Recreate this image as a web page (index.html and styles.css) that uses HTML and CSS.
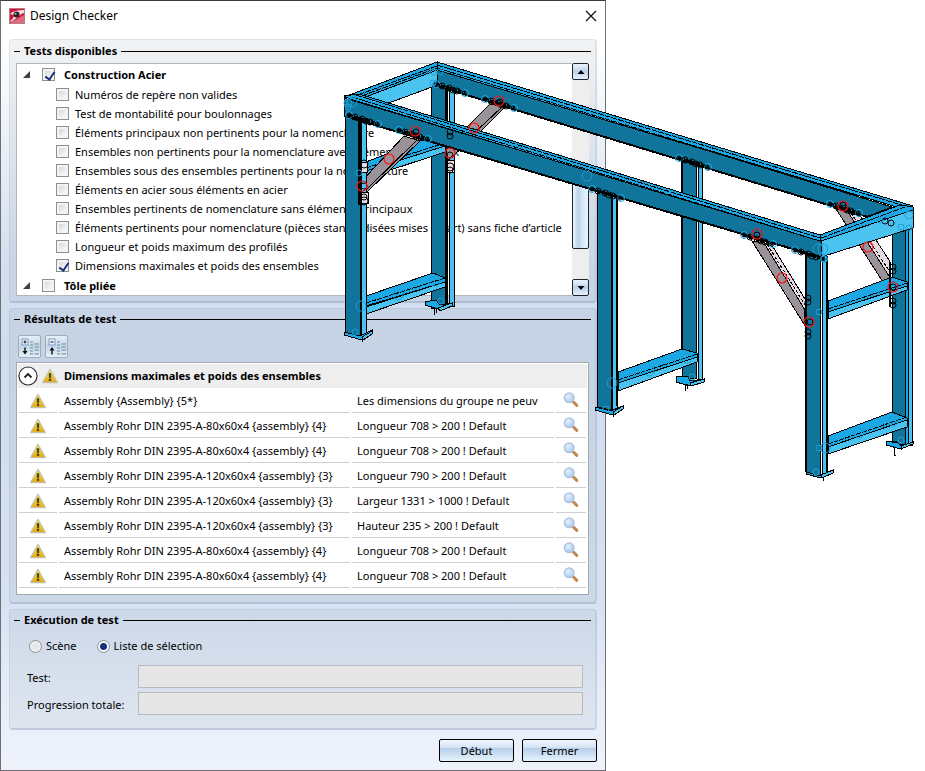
FILE: index.html
```
<!DOCTYPE html>
<html lang="fr">
<head>
  <meta charset="UTF-8" />
  <meta name="viewport" content="width=device-width, initial-scale=1.0" />
  <title>Design Checker</title>
  <link rel="stylesheet" href="styles.css">
</head>
<body>

  <!-- Icônes communes -->
  <svg class="defs" aria-hidden="true">
    <defs>
      <linearGradient id="gold" x1="0" y1="0" x2="0" y2="1">
        <stop offset="0" stop-color="#f8ec4a" />
        <stop offset="1" stop-color="#e6a810" />
      </linearGradient>
      <radialGradient id="lens" cx=".4" cy=".35" r=".7">
        <stop offset="0" stop-color="#e4f1fc" />
        <stop offset="1" stop-color="#a3c8ee" />
      </radialGradient>
    </defs>
    <symbol id="warn" viewBox="0 0 16 16">
      <path d="M8 1.2 L15.4 14.6 H.6 Z" fill="url(#gold)" stroke="#c3c0ae" stroke-width="1.2" stroke-linejoin="round" />
      <path d="M7 5.4 H9 L8.7 10 H7.3 Z M7.1 11 H8.9 V12.8 H7.1 Z" fill="#3c3a18" stroke="#3c3a18" stroke-width=".4" />
    </symbol>
    <symbol id="loupe" viewBox="0 0 16 16">
      <path d="M9.4 9.2 L11 10.8" stroke="#8a94a4" stroke-width="2" />
      <path d="M10.8 10.4 L13.8 13.4" stroke="#c08a54" stroke-width="3" stroke-linecap="round" />
      <circle cx="6.2" cy="5.8" r="4.9" fill="url(#lens)" stroke="#aebfdc" stroke-width="1.2" />
    </symbol>
  </svg>

  <main class="stage">
    <section class="dialog">
      <header class="titlebar">
        <svg class="logo" viewBox="0 0 16 16">
          <rect width="16" height="16" fill="#d2143a" />
          <path d="M1 6 C4 3 9 2 15 2 V5 C11 6 6 12 2 14 L1 13 C4 11 5 9 5 7 Z" fill="#f0dfe2" />
          <path d="M8 11 L15 6 V15 H3 Z" fill="#c8123a" />
          <path d="M1 15 L15 7 V15 Z" fill="#e8a8b4" opacity=".6" />
          <circle cx="7.5" cy="6.5" r="3" fill="#2a1c20" />
          <circle cx="6.6" cy="5.8" r="1" fill="#bbb" />
          <rect x=".5" y=".5" width="15" height="15" fill="none" stroke="#b97a86" />
        </svg>
        <h1>Design Checker</h1>
        <button class="close" aria-label="Fermer la fenêtre">
          <svg viewBox="0 0 12 12"><path d="M1 1 L11 11 M11 1 L1 11" stroke="#111" stroke-width="1.2" /></svg>
        </button>
      </header>

      <section class="group">
        <h2>Tests disponibles</h2>
        <div class="box tests">
          <ul class="tree">
            <li class="root"><span class="arrow"></span><label><input type="checkbox" checked>Construction Acier</label></li>
            <li><label><input type="checkbox">Numéros de repère non valides</label></li>
            <li><label><input type="checkbox">Test de montabilité pour boulonnages</label></li>
            <li><label><input type="checkbox">Éléments principaux non pertinents pour la nomenclature</label></li>
            <li><label><input type="checkbox">Ensembles non pertinents pour la nomenclature avec éléments principaux</label></li>
            <li><label><input type="checkbox">Ensembles sous des ensembles pertinents pour la nomenclature</label></li>
            <li><label><input type="checkbox">Éléments en acier sous éléments en acier</label></li>
            <li><label><input type="checkbox">Ensembles pertinents de nomenclature sans éléments principaux</label></li>
            <li><label><input type="checkbox">Éléments pertinents pour nomenclature (pièces standardisées mises à part) sans fiche d’article</label></li>
            <li><label><input type="checkbox">Longueur et poids maximum des profilés</label></li>
            <li><label><input type="checkbox" checked>Dimensions maximales et poids des ensembles</label></li>
            <li class="root"><span class="arrow"></span><label><input type="checkbox">Tôle pliée</label></li>
          </ul>
          <div class="scroll">
            <button aria-label="Monter"><svg viewBox="0 0 8 4"><path d="M4 0 L7.5 4 H.5 Z" /></svg></button>
            <div class="thumb"></div>
            <button aria-label="Descendre"><svg viewBox="0 0 8 4"><path d="M.5 0 H7.5 L4 4 Z" /></svg></button>
          </div>
        </div>
      </section>

      <section class="group results">
        <h2>Résultats de test</h2>
        <div class="tools">
          <button aria-label="Tout développer">
            <svg viewBox="0 0 18 18">
              <rect x="1" y="1" width="6" height="6" fill="#e8f2fb" stroke="#7e9cc4" />
              <path d="M2.5 4 H5.5 M4 2.5 V5.5" stroke="#111" />
              <path d="M4 9.5 V15" stroke="#111" stroke-width="1.4" />
              <path d="M1.5 13 H6.5 L4 16.5 Z" fill="#111" />
              <path d="M9 4 H12 M9 7 H12 M9 10 H12 M9 13 H12 M13.5 6 H18 M13.5 9 H18 M13.5 12 H18" stroke="#8ea6bd" stroke-width="1.4" />
              <path d="M9 16 H12 M13.5 16 H18" stroke="#6a7f95" />
            </svg>
          </button>
          <button aria-label="Tout réduire">
            <svg viewBox="0 0 18 18">
              <rect x="1" y="1" width="6" height="6" fill="#e8f2fb" stroke="#7e9cc4" />
              <path d="M2.5 4 H5.5" stroke="#111" />
              <path d="M4 11 V16.5" stroke="#111" stroke-width="1.4" />
              <path d="M1.5 12.5 H6.5 L4 9 Z" fill="#111" />
              <path d="M9 4 H12 M9 7 H12 M9 10 H12 M9 13 H12 M13.5 6 H18 M13.5 9 H18 M13.5 12 H18" stroke="#8ea6bd" stroke-width="1.4" />
              <path d="M9 16 H12 M13.5 16 H18" stroke="#6a7f95" />
            </svg>
          </button>
        </div>
        <div class="box list">
          <div class="category">
            <button class="fold" aria-label="Replier"><svg viewBox="0 0 20 20"><circle cx="10" cy="10" r="9" fill="#fff" stroke="#333" stroke-width="1.2" /><path d="M6.5 11.5 L10 8 L13.5 11.5" fill="none" stroke="#222" stroke-width="1.8" /></svg></button>
            <svg class="icon"><use href="#warn" /></svg>
            <h3>Dimensions maximales et poids des ensembles</h3>
          </div>
          <table>
            <colgroup><col class="c-icon"><col class="c-name"><col class="c-text"><col class="c-zoom"></colgroup>
            <tr><td><svg class="icon"><use href="#warn" /></svg></td><td>Assembly {Assembly} {5*}</td><td><span>Les dimensions du groupe ne peuv</span></td><td><svg class="icon"><use href="#loupe" /></svg></td></tr>
            <tr><td><svg class="icon"><use href="#warn" /></svg></td><td>Assembly Rohr DIN 2395-A-80x60x4 {assembly} {4}</td><td><span>Longueur 708 &gt; 200 ! Default</span></td><td><svg class="icon"><use href="#loupe" /></svg></td></tr>
            <tr><td><svg class="icon"><use href="#warn" /></svg></td><td>Assembly Rohr DIN 2395-A-80x60x4 {assembly} {4}</td><td><span>Longueur 708 &gt; 200 ! Default</span></td><td><svg class="icon"><use href="#loupe" /></svg></td></tr>
            <tr><td><svg class="icon"><use href="#warn" /></svg></td><td>Assembly Rohr DIN 2395-A-120x60x4 {assembly} {3}</td><td><span>Longueur 790 &gt; 200 ! Default</span></td><td><svg class="icon"><use href="#loupe" /></svg></td></tr>
            <tr><td><svg class="icon"><use href="#warn" /></svg></td><td>Assembly Rohr DIN 2395-A-120x60x4 {assembly} {3}</td><td><span>Largeur 1331 &gt; 1000 ! Default</span></td><td><svg class="icon"><use href="#loupe" /></svg></td></tr>
            <tr><td><svg class="icon"><use href="#warn" /></svg></td><td>Assembly Rohr DIN 2395-A-120x60x4 {assembly} {3}</td><td><span>Hauteur 235 &gt; 200 ! Default</span></td><td><svg class="icon"><use href="#loupe" /></svg></td></tr>
            <tr><td><svg class="icon"><use href="#warn" /></svg></td><td>Assembly Rohr DIN 2395-A-80x60x4 {assembly} {4}</td><td><span>Longueur 708 &gt; 200 ! Default</span></td><td><svg class="icon"><use href="#loupe" /></svg></td></tr>
            <tr><td><svg class="icon"><use href="#warn" /></svg></td><td>Assembly Rohr DIN 2395-A-80x60x4 {assembly} {4}</td><td><span>Longueur 708 &gt; 200 ! Default</span></td><td><svg class="icon"><use href="#loupe" /></svg></td></tr>
          </table>
        </div>
      </section>

      <section class="group run">
        <h2>Exécution de test</h2>
        <div class="radios">
          <label><input type="radio" name="cible">Scène</label>
          <label><input type="radio" name="cible" checked>Liste de sélection</label>
        </div>
        <div class="bars">
          <label for="p-test">Test:</label>
          <progress id="p-test" value="0" max="100"></progress>
          <label for="p-total">Progression totale:</label>
          <progress id="p-total" value="0" max="100"></progress>
        </div>
      </section>

      <footer class="actions">
        <button>Début</button>
        <button>Fermer</button>
      </footer>
    </section>

    <!-- Structure acier -->
    <svg class="model" viewBox="340 50 585 440" role="img" aria-label="Structure acier">
      <defs>
        <!-- rangée de boulons le long d'une poutre -->
        <g id="bolts" fill="none" stroke="#000">
          <path d="M0 0 L30 9" stroke-width="3" stroke-dasharray="5 1" />
          <circle cx="1" cy="0" r="3.5" stroke="#1ba8e4" /><circle cx="1" cy="0" r="2" />
          <circle cx="7" cy="2" r="3" /><circle cx="14" cy="4" r="3" />
          <circle cx="18" cy="6" r="3" /><circle cx="22" cy="7" r="3" />
          <circle cx="30" cy="9" r="3.5" stroke="#1ba8e4" /><circle cx="29" cy="9" r="2" />
        </g>
      </defs>

      <!-- pied arrière gauche -->
      <path class="dark" d="M431 84 H446 V308 H431 Z" />
      <path class="light" d="M449 88 H454 V306 H449 Z" />
      <path class="thick" d="M447 88 V306" />
      <path class="wire" d="M445 84 V308 M431 84 V300" />
      <path class="mid" d="M425 302 L436 300 L440 305 L452 303 V306 L438 309 L425 305 Z" />
      <path class="light" d="M438 308 L452 303 V306 L440 311 Z" />
      <path class="wire" d="M434 309 V315 M436 309 V313" />

      <!-- pied arrière milieu -->
      <path class="dark" d="M682 160 H696 V378 H682 Z" />
      <path class="light" d="M698 164 H702 V380 H698 Z" />
      <path class="wire" d="M681 160 V366 M696 160 V378" />
      <path class="mid" d="M676 377 L688 376 L690 381 L704 379 V382 L690 386 L676 382 Z" />
      <path class="light" d="M690 383 L704 379 V382 L691 386 Z" />
      <path class="wire" d="M685 384 V391 M687 384 V389" />

      <!-- pied arrière droit -->
      <path class="dark" d="M892 220 H905 V444 H892 Z" />
      <path class="mid" d="M905 224 H908 V444 H905 Z" />
      <path class="light" d="M908 226 H912 V445 H908 Z" />
      <path class="mid" d="M886 441 L896 441 L901 446 L901 449 L886 445 Z" />
      <path class="light" d="M901 446 L913 442 V444 L901 449 Z" />
      <path class="wire" d="M894 447 V455 L896 455 M892 442 H897" />

      <!-- diagonales arrière -->
      <path class="grey" d="M464 130 L490 104 L505 107 L477 135 L448 160 L446 150 Z" />
      <path class="wire" d="M472 135 L501 108" />
      <path class="grey" d="M836 209 L848 212 L890 276 V282 H883 Z" />
      <path class="pink" d="M848 212 L861 217 L889 260 V276 Z" />
      <path class="wire" d="M851 213 L890 272" stroke-dasharray="3 2" />

      <!-- traverses -->
      <path class="mid" d="M366 162 L428 138 L445 141 V146 L366 171 Z" />
      <path class="light" d="M366 171 L445 146 V152 L366 178 Z" />
      <path class="wire" d="M366 168 L445 143" stroke-dasharray="5 1" />
      <path class="mid" d="M366 296 L433 273 L445 278 V282 L366 306 Z" />
      <path class="light" d="M366 307 L445 282 V287 L366 314 Z" />
      <path class="wire" d="M366 303 L445 278" stroke-dasharray="5 1" />
      <path class="mid" d="M618 372 L682 349 L697 353 V357 L618 383 Z" />
      <path class="light" d="M618 383 L697 357 V362 L618 391 Z" />
      <path class="wire" d="M618 380 L697 354" stroke-dasharray="5 1" />
      <path class="mid" d="M828 301 L892 277 L907 282 V286 L828 312 Z" />
      <path class="light" d="M828 312 L907 286 V290 L828 319 Z" />
      <path class="wire" d="M828 309 L907 283" stroke-dasharray="5 1" />
      <path class="mid" d="M828 436 L892 412 L907 418 V420 L828 447 Z" />
      <path class="light" d="M828 447 L907 420 V427 L828 454 Z" />
      <path class="wire" d="M828 444 L907 417" stroke-dasharray="5 1" />

      <!-- poutre gauche -->
      <path class="light" d="M352 100 L437 70 V86 L432 87 L386 104 Z" />
      <path class="mid" d="M344 97 L437 62 V70 L360 99 Z" />
      <path class="wire" d="M352 97 L437 66 M356 98 L437 68" stroke-dasharray="6 1" />

      <!-- poutre arrière -->
      <path class="dark" d="M437 68 L892 207 L866 217 L437 86 Z" />
      <path class="mid" d="M437 62 L913 206 L900 208 L437 70 Z" />
      <path class="wire" d="M437 65 L905 206 M437 68 L900 208" stroke-dasharray="6 1" />
      <path class="thick" d="M437 86 L868 217" />

      <!-- diagonale avant gauche -->
      <path class="grey" d="M361 182 L404 136 L420 141 L367 192 L362 192 Z" />
      <path class="wire" d="M365 191 L417 140" />
      <!-- diagonale avant droite -->
      <path class="grey" d="M752 241 L764 243 L804 308 V324 Z" />
      <path class="pink" d="M764 243 L773 247 L805 299 V310 Z" />
      <path class="wire" d="M767 244 L805 305" stroke-dasharray="3 2" />

      <!-- pieds avant -->
      <path class="dark" d="M345 112 H360 V338 L345 333 Z" />
      <path class="light" d="M361 118 H366 V334 L361 338 Z" />
      <path class="thick" d="M361 118 V336" />
      <path class="mid" d="M344 332 L360 336 L372 330 V333 L362 340 L344 335 Z" />
      <path class="light" d="M362 337 L372 331 V334 L363 340 Z" />
      <path class="wire" d="M362 340 V342" />

      <path class="dark" d="M597 188 H611 V410 L597 407 Z" />
      <path class="light" d="M612 194 H617 V408 L612 411 Z" />
      <path class="thick" d="M617 196 V406" />
      <path class="mid" d="M595 407 L611 411 L623 406 V409 L613 415 L595 410 Z" />
      <path class="light" d="M613 412 L623 406 V409 L614 415 Z" />
      <path class="wire" d="M613 415 V417" />

      <path class="dark" d="M806 250 H820 V476 L806 472 Z" />
      <path class="light" d="M822 256 H827 V473 L822 477 Z" />
      <path class="thick" d="M806 256 V472 M827 256 V472" />
      <path class="mid" d="M806 472 L821 476 L833 470 V473 L821 478 L806 474 Z" />
      <path class="light" d="M821 475 L833 470 V473 L822 478 Z" />
      <path class="wire" d="M823 478 V481" />

      <!-- poutre avant -->
      <path class="dark" d="M344 98 L821 240 V258 L344 116 Z" />
      <path class="mid" d="M344 96 L359 94 L820 235 V241 L350 99 Z" />
      <path class="wire" d="M356 95 L820 238 M352 97 L820 241" stroke-dasharray="6 1" />
      <path class="thick" d="M344 116 L820 257" />

      <!-- poutre droite -->
      <path class="light" d="M821 241 L913 208 V228 L821 257 Z" />
      <path class="mid" d="M820 235 L900 205 L913 207 V210 L821 241 Z" />
      <path class="wire" d="M821 238 L905 207" stroke-dasharray="6 1" />

      <!-- goussets -->
      <path class="pink" d="M361 162 H367 V172 H361 Z M361 192 H368 V203 H361 Z M447 160 H454 V172 H447 Z" />
      <path d="M359 118 V205 M806 296 V337 M890 262 V307" stroke="#000" stroke-width="2" />
      <g fill="none" stroke="#000">
        <circle cx="364" cy="164" r="4" /><circle cx="364" cy="197" r="3" /><circle cx="364" cy="201" r="4" />
        <circle cx="450" cy="132" r="3" /><circle cx="450" cy="136" r="3" />
        <circle cx="450" cy="167" r="4" /><circle cx="450" cy="170" r="3" />
        <circle cx="808" cy="298" r="3" /><circle cx="808" cy="302" r="3" /><circle cx="808" cy="332" r="3" /><circle cx="808" cy="336" r="3" />
        <circle cx="893" cy="267" r="3" /><circle cx="893" cy="271" r="3" /><circle cx="893" cy="301" r="3" /><circle cx="893" cy="305" r="3" />
        <circle cx="885" cy="221" r="3" /><circle cx="891" cy="223" r="3" />
        <circle cx="364" cy="186" r="3" /><circle cx="416" cy="132" r="3" /><circle cx="450" cy="155" r="3" /><circle cx="500" cy="102" r="3" />
        <circle cx="757" cy="235" r="3" /><circle cx="810" cy="322" r="3" /><circle cx="843" cy="205" r="3" /><circle cx="893" cy="287" r="3" />
      </g>
      <use href="#bolts" x="348" y="115" />
      <use href="#bolts" x="398" y="130" />
      <use href="#bolts" x="435" y="84" />
      <use href="#bolts" x="484" y="99" />
      <use href="#bolts" x="591" y="189" />
      <use href="#bolts" x="678" y="158" />
      <use href="#bolts" x="743" y="235" />
      <use href="#bolts" x="794" y="250" />
      <use href="#bolts" x="829" y="204" />

      <!-- repères -->
      <g fill="none" stroke="#1ba0d8">
        <circle cx="348" cy="103" r="4" /><circle cx="352" cy="102" r="5" /><circle cx="348" cy="107" r="3" />
        <circle cx="433" cy="72" r="3" /><circle cx="440" cy="72" r="3" /><circle cx="433" cy="83" r="3" />
        <circle cx="587" cy="176" r="5" /><circle cx="359" cy="173" r="3" />
        <circle cx="398" cy="295" r="5" /><circle cx="435" cy="281" r="5" /><circle cx="361" cy="306" r="5" /><circle cx="355" cy="332" r="3" />
        <circle cx="441" cy="301" r="3" /><circle cx="612" cy="383" r="5" /><circle cx="649" cy="371" r="5" /><circle cx="687" cy="358" r="5" />
        <circle cx="606" cy="409" r="3" /><circle cx="692" cy="377" r="3" />
        <circle cx="818" cy="249" r="5" /><circle cx="823" cy="249" r="5" /><circle cx="824" cy="259" r="3" />
        <circle cx="909" cy="215" r="4" /><circle cx="901" cy="227" r="3" /><circle cx="909" cy="228" r="3" /><circle cx="880" cy="220" r="3" />
        <circle cx="819" cy="312" r="3" /><circle cx="819" cy="448" r="3" /><circle cx="825" cy="448" r="5" />
        <circle cx="859" cy="433" r="5" /><circle cx="893" cy="421" r="5" /><circle cx="816" cy="472" r="3" /><circle cx="901" cy="440" r="3" />
      </g>
      <g fill="none" stroke="#ff1010" stroke-width="1.2">
        <circle cx="499" cy="101" r="5" /><circle cx="474" cy="128" r="5" /><circle cx="450" cy="153" r="5" />
        <circle cx="415" cy="131" r="5" /><circle cx="389" cy="159" r="5" /><circle cx="362" cy="186" r="5" />
        <circle cx="757" cy="234" r="5" /><circle cx="782" cy="278" r="5" /><circle cx="809" cy="322" r="5" />
        <circle cx="843" cy="206" r="5" /><circle cx="868" cy="247" r="5" /><circle cx="893" cy="287" r="5" />
      </g>
    </svg>
  </main>

</body>
</html>
```
FILE: styles.css
```
* {
  box-sizing: border-box;
}

body {
  margin: 0;
  background: #fff;
  color: #000;
  font: 11px/16px 'Noto Sans', 'Segoe UI', sans-serif;
}

h1, h2, h3, ul {
  margin: 0;
  padding: 0;
  font-size: 11px;
}

button {
  font: inherit;
  color: inherit;
  padding: 0;
}

svg {
  display: block;
}

.defs {
  position: absolute;
  width: 0;
  height: 0;
}

.stage {
  position: relative;
  display: grid;
  grid-template-columns: 606fr 319fr;
  min-height: 100vh;
}

/* fenêtre */
.dialog {
  display: flex;
  flex-direction: column;
  gap: 5px;
  min-width: 0;
  padding: 0 8px 8px;
  border: 1px solid #707070;
  border-top-color: #3f3b3c;
  background: linear-gradient(#fff 0, #fff 5%, #d3dfef 34%, #d0ddef 45%, #d6e2f3 78%, #e8effa 93%, #eef2fb);
}

.titlebar {
  display: flex;
  align-items: center;
  gap: 5px;
  height: 33px;
  padding-bottom: 3px;
}

.titlebar h1 {
  flex: 1;
  font-weight: normal;
  font-size: 12px;
}

.logo {
  width: 16px;
  height: 16px;
}

.close {
  width: 12px;
  height: 12px;
  border: 0;
  background: none;
}

/* groupes */
.group {
  padding: 3px 6px 5px;
  border: 1px solid rgba(110, 125, 150, .14);
  border-right-width: 2px;
  border-bottom: 2px solid rgba(90, 110, 145, .22);
  border-radius: 4px;
  background: rgba(70, 80, 95, .07);
}

.group h2 {
  display: flex;
  align-items: center;
  gap: 4px;
  height: 16px;
}

.group h2::before,
.group h2::after {
  content: "";
  width: 6px;
  height: 1px;
  margin-left: -2px;
  background: #000;
}

.group h2::after {
  flex: 1;
  margin: 0 -2px 0 0;
}

.box {
  background: #fff;
  border: 1px solid #a5a8ac;
}

/* arbre des tests */
.tests {
  display: flex;
  margin-top: 4px;
  border-color: #b4b6ba;
  border-right: 0;
}

.tree {
  flex: 1;
  min-width: 0;
  height: 231px;
  overflow: hidden;
  list-style: none;
}

.tree li {
  height: 19px;
  padding-left: 39px;
  white-space: nowrap;
}

.tree label {
  display: flex;
  align-items: center;
  gap: 6px;
  height: 100%;
}

.tree .root {
  display: flex;
  align-items: center;
  gap: 12px;
  height: 21px;
  padding-left: 6px;
  font-weight: bold;
}

.root label {
  gap: 9px;
}

.arrow {
  border-left: 7px solid transparent;
  border-bottom: 7px solid #404040;
}

input {
  flex: none;
  width: 13px;
  height: 13px;
  margin: 0;
  appearance: none;
  border: 1px solid #8e8f8f;
  background: linear-gradient(135deg, #d5d7da, #fafafa) content-box, #f4f4f4;
  padding: 2px;
}

input[type="checkbox"]:checked::after {
  content: "";
  display: block;
  width: 4px;
  height: 8px;
  margin: -1px 0 0 2px;
  border: solid #17307a;
  border-width: 0 2px 2px 0;
  transform: rotate(35deg);
}

input[type="radio"] {
  border-radius: 50%;
  background: radial-gradient(#e0e2e4, #f8f8f8);
}

input[type="radio"]:checked {
  background: radial-gradient(circle, #17307a 0, #17307a 3px, #f4f6fa 4px);
}

.scroll {
  display: flex;
  flex-direction: column;
  justify-content: space-between;
  width: 17px;
  margin: -1px 0;
  background: #eee;
}

.scroll button,
.thumb {
  width: 17px;
  border: 1px solid #1c2430;
  border-radius: 2px;
  background: linear-gradient(#eef5fc, #bcd2ea 50%, #e4f2fd);
}

.scroll button {
  display: grid;
  place-items: center;
  height: 17px;
}

.scroll svg {
  width: 8px;
  height: 4px;
}

/* la partie haute passe sous la poutre */
.thumb {
  height: 76px;
  margin-top: 63px;
  background: linear-gradient(90deg, #eef5fc, #bcd2ea 35%, #d4e6f6 60%, #e8f5ff);
}

/* résultats */
.results {
  padding-top: 2px;
  padding-bottom: 7px;
}

.tools {
  display: flex;
  gap: 4px;
  padding: 8px 2px 4px;
}

.tools button {
  display: grid;
  place-items: center;
  width: 23px;
  height: 23px;
  border: 1px solid #a3abb8;
  border-radius: 2px;
  background: linear-gradient(#e6f0f8, #c3d5e6 50%, #e3f2f8);
}

.tools svg {
  width: 18px;
  height: 18px;
}

.list {
  padding-bottom: 6px;
}

.icon {
  width: 16px;
  height: 16px;
}

.category {
  display: flex;
  align-items: center;
  gap: 4px;
  height: 24px;
  margin: 1px 1px 0;
  background: #eee;
}

.category h3 {
  padding-left: 2px;
}

.fold {
  border: 0;
  background: none;
}

.fold svg {
  width: 20px;
  height: 20px;
}

table {
  width: 100%;
  table-layout: fixed;
  border-collapse: separate;
  border-spacing: 2px 0;
}

.c-icon {
  width: 38px;
}

.c-text {
  width: 202px;
}

.c-zoom {
  width: 30px;
}

td {
  height: 25px;
  padding: 2px 5px 0;
  border-bottom: 1px solid #d0d0d0;
  white-space: nowrap;
}

td span {
  display: block;
  max-width: 182px;
  overflow: hidden;
}

td .icon {
  margin: auto;
}

td:last-child {
  padding-top: 0;
}

/* exécution */
.run {
  padding-top: 2px;
}

.radios {
  display: flex;
  gap: 20px;
  padding: 10px 13px;
}

.radios label {
  display: flex;
  align-items: center;
  gap: 4px;
}

.bars {
  display: grid;
  grid-template-columns: 107px 1fr;
  gap: 4px;
  padding: 1px 6px 8px 11px;
}

.bars label {
  padding-top: 5px;
}

progress {
  width: 100%;
  height: 23px;
  appearance: none;
  border: 1px solid #b8babd;
  background: #e6e6e6;
}

progress::-webkit-progress-bar {
  background: #e6e6e6;
}

progress::-webkit-progress-value {
  background: #7fb0e0;
}

.actions {
  display: flex;
  justify-content: flex-end;
  gap: 8px;
  margin-top: auto;
}

.actions button {
  width: 75px;
  height: 23px;
  border: 1px solid #000;
  border-radius: 2px;
  background: linear-gradient(#f2f7fc, #d6e4f4 35%, #b6cfe9 40%, #e6f3fd);
}

/* modèle 3D posé sur la fenêtre */
.model {
  position: absolute;
  top: 50px;
  left: 340px;
  width: calc(100% - 340px);
  pointer-events: none;
  shape-rendering: crispEdges;
}

.model circle {
  shape-rendering: geometricPrecision;
}

.model .dark,
.model .mid,
.model .light,
.model .grey,
.model .pink,
.model .wire,
.model .thick {
  stroke: #000;
  stroke-width: 1px;
}

.model .dark {
  fill: #11759b;
}

.model .mid {
  fill: #1ba8e4;
}

.model .light {
  fill: #4ac3f1;
}

.model .grey {
  fill: #9a9299;
}

.model .pink {
  fill: #e6dae2;
}

.model .wire,
.model .thick {
  fill: none;
}

.model .thick {
  stroke-width: 2px;
}
```
